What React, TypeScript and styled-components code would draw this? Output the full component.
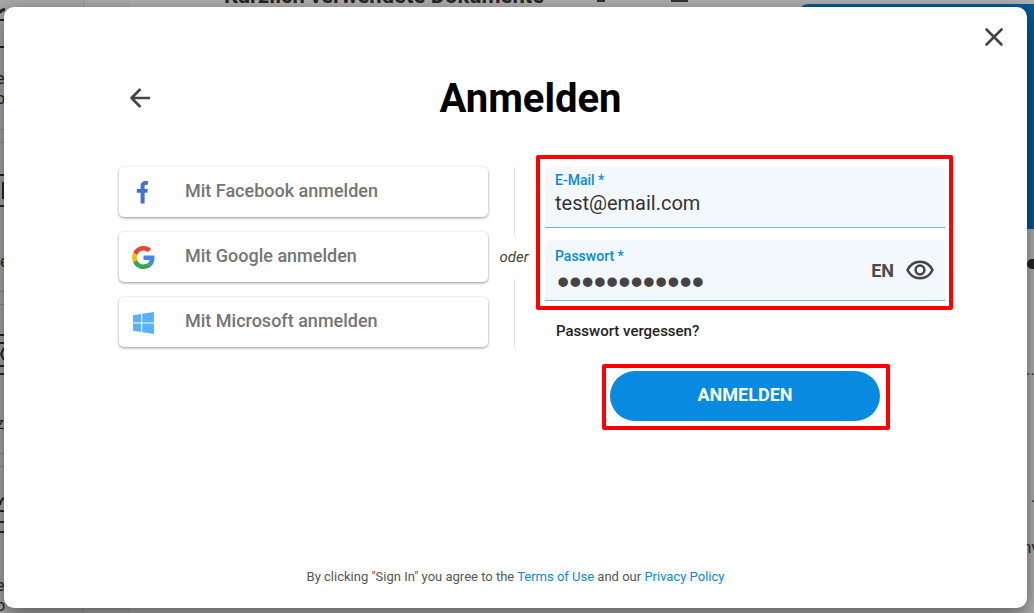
import React from "react";
import styled, { createGlobalStyle } from "styled-components";

const GlobalStyle = createGlobalStyle`
  * { box-sizing: border-box; }
  body {
    margin: 0;
    font-family: Roboto, "Liberation Sans", sans-serif;
    background: #b0b0b0;
    color: #333;
  }
  button, input { font-family: inherit; }
`;

const Page = styled.div`
  position: relative;
  display: flex;
  min-height: 100vh;
  padding: 7px 7px 5px 4px;
  overflow: hidden;
`;

/* Dimmed page under the dialog */
const Backdrop = styled.div`
  position: absolute;
  inset: 0;
  display: flex;
  overflow: hidden;
  background: #b0b0b0;
  color: #252525;
`;

const Sidebar = styled.div`
  width: 84px;
  flex: none;
  border-right: 1px solid #989898;
  background: #a9a9a9;
`;

const Tile = styled.div<{ $first?: boolean }>`
  height: ${(p) => (p.$first ? 130 : 150)}px;
  margin-bottom: 12px;
  padding-top: ${(p) => (p.$first ? 5 : 25)}px;
  border: solid #8f8f8f;
  border-width: ${(p) => (p.$first ? "0 0 1px" : "1px 0")};
  overflow: hidden;
  svg { display: block; }
`;

const TileText = styled.div`
  margin-left: -4px;
  padding-top: 18px;
  font-size: 16px;
  line-height: 20px;
`;

const Gutter = styled.div`
  width: 46px;
  flex: none;
  background: #acacac;
`;

const Recent = styled.div`
  display: flex;
  flex: 1;
  align-items: flex-start;
  padding-left: 94px;
  margin-top: -16px;
`;

const RecentTitle = styled.div`
  font-size: 22px;
  font-weight: 700;
  line-height: 24px;
  white-space: nowrap;
`;

const RecentMark = styled.div<{ $w: number; $gap: number }>`
  width: ${(p) => p.$w}px;
  height: 18px;
  margin-left: ${(p) => p.$gap}px;
  border-bottom: 3px solid #333;
`;

const Aside = styled.div`
  width: 236px;
  flex: none;
  padding-top: 4px;
`;

const Banner = styled.div`
  height: 225px;
  border-radius: 10px 0 0 0;
  background: #005c98;
`;

const AsideLine = styled.div<{ $h: number }>`
  display: flex;
  height: ${(p) => p.$h}px;
  align-items: flex-end;
  justify-content: flex-end;
  margin-right: -5px;
  font-size: 16px;
  line-height: 20px;
`;

const Knob = styled.span`
  width: 12px;
  height: 10px;
  border-radius: 5px;
  background: #252525;
`;

const Dialog = styled.main`
  position: relative;
  display: flex;
  flex: 1;
  flex-direction: column;
  border-radius: 10px;
  background: #fff;
  box-shadow: 0 6px 20px rgba(0, 0, 0, 0.5);
`;

const CloseRow = styled.div`
  display: flex;
  justify-content: flex-end;
  padding: 18px 21px 0 0;
`;

const IconButton = styled.button`
  display: flex;
  padding: 0;
  border: 0;
  background: none;
  color: #444;
  cursor: pointer;
  svg { display: block; }
`;

const Content = styled.div`
  padding: 0 82px 0 115px;
`;

const Header = styled.header`
  display: grid;
  grid-template-columns: 44px 1fr 44px;
  align-items: center;
  margin-top: 24px;
  padding-left: 5px;
  padding-right: 8px;
`;

const Title = styled.h1`
  margin: 0;
  padding-top: 2px;
  color: #000;
  font-size: 40px;
  font-weight: 700;
  line-height: 48px;
  text-align: center;
`;

const Columns = styled.div`
  display: grid;
  grid-template-columns: 369fr 52px 405fr;
  margin-top: 44px;
`;

const Providers = styled.div`
  display: flex;
  flex-direction: column;
  gap: 15px;
`;

const ProviderButton = styled.button`
  display: flex;
  align-items: center;
  gap: 30px;
  height: 50px;
  padding: 0 13px;
  border: 0;
  border-radius: 5px;
  background: #fff;
  color: #757575;
  font-size: 18px;
  font-weight: 500;
  line-height: 20px;
  box-shadow: 0 1px 3px rgba(0, 0, 0, 0.42);
  cursor: pointer;
  svg { display: block; }
  span { padding-bottom: 2px; }
`;

const Separator = styled.div`
  display: flex;
  flex-direction: column;
  align-items: center;
  height: 180px;
  color: #444;
  font-size: 15px;
  font-style: italic;
  line-height: 44px;
  &::before, &::after {
    content: "";
    flex: 1;
    width: 1px;
    background: #e0e0e0;
  }
`;

const Form = styled.form`
  padding-left: 5px;
`;

const Highlight = styled.div<{ $inset: string }>`
  position: relative;
  &::after {
    content: "";
    position: absolute;
    inset: ${(p) => p.$inset};
    border: 4px solid #fe0000;
    border-radius: 2px;
    pointer-events: none;
  }
`;

const Fields = styled(Highlight)`
  display: flex;
  flex-direction: column;
  gap: 12px;
`;

const Field = styled.div`
  display: flex;
  align-items: center;
  height: 61px;
  padding: 0 11px 0 10px;
  border-bottom: 1px solid #6fb5e2;
  border-radius: 5px 5px 0 0;
  background: #f3f8fd;
`;

const FieldText = styled.div`
  display: flex;
  flex: 1;
  flex-direction: column;
  align-self: stretch;
  min-width: 0;
`;

const Label = styled.label<{ $top: number }>`
  padding-top: ${(p) => p.$top}px;
  color: #078adf;
  font-size: 14px;
  font-weight: 500;
  line-height: 16px;
`;

const Input = styled.input`
  width: 100%;
  height: 30px;
  padding: 0;
  border: 0;
  outline: 0;
  background: none;
  color: #333;
  font-size: 20px;
  &[type="password"] {
    height: 36px;
    padding-left: 2px;
    color: #444;
    font-family: "Liberation Sans", sans-serif;
    font-size: 35px;
  }
`;

const Lang = styled.span`
  margin-right: 12px;
  color: #4a4a4a;
  font-size: 18px;
  font-weight: 700;
`;

const Forgot = styled.a`
  display: block;
  width: max-content;
  margin: 20px 0 0 11px;
  color: #222;
  font-size: 15px;
  font-weight: 500;
  line-height: 20px;
  text-decoration: none;
`;

const SubmitBox = styled(Highlight)`
  width: 270px;
  margin: 30px auto 0;
`;

const Submit = styled.button`
  display: block;
  width: 100%;
  height: 50px;
  padding: 0 0 4px;
  border: 0;
  border-radius: 25px;
  background: #078adf;
  color: #fff;
  font-size: 18px;
  font-weight: 700;
  cursor: pointer;
`;

const Footer = styled.footer`
  margin-top: auto;
  padding-bottom: 21px;
  color: #555;
  font-size: 13px;
  line-height: 20px;
  text-align: center;
  a { color: #078adf; text-decoration: none; }
`;

const CloseIcon = () => (
  <svg width="24" height="24" viewBox="0 0 24 24" stroke="currentColor" strokeWidth="2.6" strokeLinecap="round">
    <path d="M4.5 4.5l15 15M19.5 4.5l-15 15" />
  </svg>
);

const BackIcon = () => (
  <svg width="32" height="32" viewBox="0 0 32 32" fill="none" stroke="currentColor" strokeWidth="2.6" strokeLinejoin="round">
    <path d="M26 16H7.5M16.5 7L7.5 16l9 9" />
  </svg>
);

const FacebookIcon = () => (
  <svg width="23" height="24" viewBox="0 0 23 24" fill="#4271d6">
    <path d="M8.600 23.500V12.700H4.800V8.900h3.800V6C8.600 2.600 10.800 1 13.600 1c1.200 0 2 .1 2.300.2v3.600h-1.500c-1.400 0-1.800.7-1.800 1.900v2.200h3.300l-.7 3.800h-2.600v10.800z" />
  </svg>
);

const GoogleIcon = () => (
  <svg width="23" height="23" viewBox="0 0 48 48">
    <path fill="#EA4335" d="M24 9.5c3.54 0 6.71 1.22 9.21 3.6l6.85-6.85C35.9 2.38 30.47 0 24 0 14.62 0 6.51 5.38 2.56 13.22l7.98 6.19C12.43 13.72 17.74 9.5 24 9.5z" />
    <path fill="#4285F4" d="M46.98 24.55c0-1.57-.15-3.09-.38-4.55H24v9.02h12.94c-.58 2.96-2.26 5.48-4.78 7.18l7.73 6c4.51-4.18 7.09-10.36 7.09-17.65z" />
    <path fill="#FBBC05" d="M10.53 28.59c-.48-1.45-.76-2.99-.76-4.59s.27-3.14.76-4.59l-7.98-6.19C.92 16.46 0 20.12 0 24c0 3.88.92 7.54 2.56 10.78l7.97-6.19z" />
    <path fill="#34A853" d="M24 48c6.48 0 11.93-2.13 15.89-5.81l-7.73-6c-2.15 1.45-4.92 2.3-8.16 2.3-6.26 0-11.57-4.22-13.47-9.91l-7.98 6.19C6.51 42.62 14.62 48 24 48z" />
  </svg>
);

const MicrosoftIcon = () => (
  <svg width="23" height="23" viewBox="0 0 23 23" fill="#5ab2ff">
    <path d="M1 4.2l8-1.2v8.400H1zM10.200 2.800L22 1v10.400H10.200zM1 12.600h8V21l-8-1.200zM10.200 12.600H22V23l-11.800-1.800z" />
  </svg>
);

const EyeIcon = () => (
  <svg width="28" height="22" viewBox="0 0 28 22" fill="none" stroke="currentColor" strokeWidth="2.5">
    <path d="M1.5 11C4 5.800 8.500 2.700 14 2.700S24 5.800 26.500 11C24 16.200 19.500 19.300 14 19.300S4 16.200 1.500 11z" />
    <circle cx="14" cy="11" r="4.400" />
  </svg>
);

const tiles = [
  { art: "M0 6q2-2 5-2M0 8q2-3 5-3M0 15h4M0 42h4", text: ["er", "o"] },
  { art: "M0 7h4M3 14v17M0 38h4", text: ["", "le"] },
  { art: "M0 5h4M0 13h4M4 18L1 24l3 6M0 36h4M0 44h4", text: ["", "z"] },
  { art: "M0 13q1-6 4-7M0 19h4M0 30h4M0 40h4", text: ["", "e", "o"] },
];

export default function App() {
  return (
    <>
      <GlobalStyle />
      <Page>
        <Backdrop aria-hidden="true">
          <Sidebar>
            {tiles.map((tile, i) => (
              <Tile key={i} $first={i === 0}>
                <svg width="60" height="46" viewBox="0 0 60 46" fill="none" stroke="#252525" strokeWidth="2">
                  <path d={tile.art} />
                </svg>
                <TileText>
                  {tile.text.map((line, n) => (
                    <div key={n}>{line || "\u00a0"}</div>
                  ))}
                </TileText>
              </Tile>
            ))}
          </Sidebar>
          <Gutter />
          <Recent>
            <RecentTitle>Kürzlich verwendete Dokumente</RecentTitle>
            <RecentMark $w={8} $gap={53} />
            <RecentMark $w={17} $gap={66} />
          </Recent>
          <Aside>
            <Banner />
            <AsideLine $h={40}><Knob /></AsideLine>
            <AsideLine $h={111}>...</AsideLine>
            <AsideLine $h={127}>.&nbsp;</AsideLine>
            <AsideLine $h={51}>nv</AsideLine>
          </Aside>
        </Backdrop>

        <Dialog role="dialog" aria-labelledby="login-title">
          <CloseRow>
            <IconButton type="button" aria-label="Schließen"><CloseIcon /></IconButton>
          </CloseRow>
          <Content>
            <Header>
              <IconButton type="button" aria-label="Zurück"><BackIcon /></IconButton>
              <Title id="login-title">Anmelden</Title>
            </Header>
            <Columns>
              <Providers>
                <ProviderButton type="button"><FacebookIcon /><span>Mit Facebook anmelden</span></ProviderButton>
                <ProviderButton type="button"><GoogleIcon /><span>Mit Google anmelden</span></ProviderButton>
                <ProviderButton type="button"><MicrosoftIcon /><span>Mit Microsoft anmelden</span></ProviderButton>
              </Providers>
              <Separator>oder</Separator>
              <Form onSubmit={(e) => e.preventDefault()}>
                <Fields $inset="-12px -8px -9px -9px">
                  <Field>
                    <FieldText>
                      <Label htmlFor="email" $top={5}>E-Mail *</Label>
                      <Input id="email" type="email" defaultValue="test@email.com" />
                    </FieldText>
                  </Field>
                  <Field>
                    <FieldText>
                      <Label htmlFor="password" $top={8}>Passwort *</Label>
                      <Input id="password" type="password" defaultValue="abcdefghijkl" />
                    </FieldText>
                    <Lang>EN</Lang>
                    <IconButton type="button" aria-label="Passwort anzeigen"><EyeIcon /></IconButton>
                  </Field>
                </Fields>
                <Forgot href="#">Passwort vergessen?</Forgot>
                <SubmitBox $inset="-7px -10px -9px -8px">
                  <Submit type="submit">ANMELDEN</Submit>
                </SubmitBox>
              </Form>
            </Columns>
          </Content>
          <Footer>
            By clicking "Sign In" you agree to the <a href="#">Terms of Use</a> and our <a href="#">Privacy Policy</a>
          </Footer>
        </Dialog>
      </Page>
    </>
  );
}
